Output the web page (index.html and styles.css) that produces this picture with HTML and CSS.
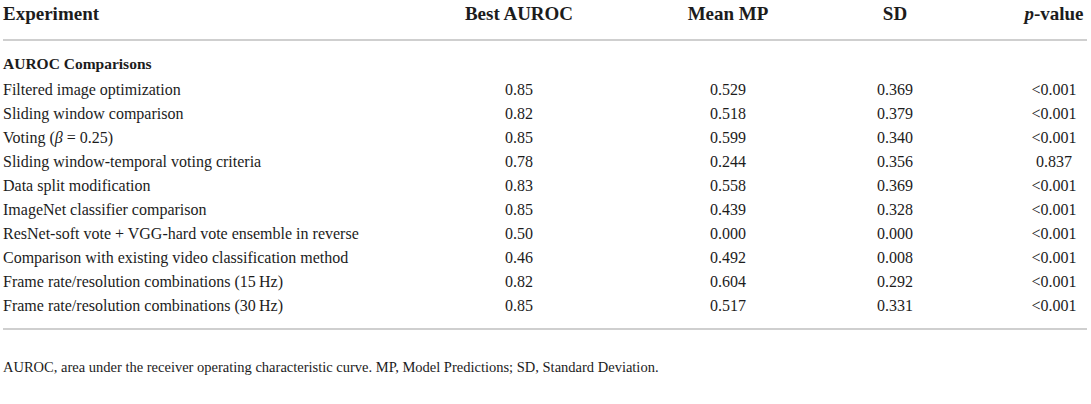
FILE: index.html
```html
<!DOCTYPE html>
<html lang="en">

<head>
    <meta charset="UTF-8" />
    <title>AUROC Comparisons</title>
    <link rel="stylesheet" href="styles.css">
</head>

<body>
    <div class="wrap">
        <table class="results">
            <colgroup>
                <col class="c-exp">
                <col class="c-best">
                <col class="c-mean">
                <col class="c-sd">
                <col class="c-p">
            </colgroup>
            <thead>
                <tr>
                    <th class="left">Experiment</th>
                    <th>Best AUROC</th>
                    <th>Mean MP</th>
                    <th>SD</th>
                    <th><i>p</i>-value</th>
                </tr>
            </thead>
            <tbody>
                <tr class="group">
                    <td colspan="5">AUROC Comparisons</td>
                </tr>
                <tr>
                    <td>Filtered image optimization</td>
                    <td>0.85</td>
                    <td>0.529</td>
                    <td>0.369</td>
                    <td>&lt;0.001</td>
                </tr>
                <tr>
                    <td>Sliding window comparison</td>
                    <td>0.82</td>
                    <td>0.518</td>
                    <td>0.379</td>
                    <td>&lt;0.001</td>
                </tr>
                <tr>
                    <td>Voting (<i>β</i> = 0.25)</td>
                    <td>0.85</td>
                    <td>0.599</td>
                    <td>0.340</td>
                    <td>&lt;0.001</td>
                </tr>
                <tr>
                    <td>Sliding window-temporal voting criteria</td>
                    <td>0.78</td>
                    <td>0.244</td>
                    <td>0.356</td>
                    <td>0.837</td>
                </tr>
                <tr>
                    <td>Data split modification</td>
                    <td>0.83</td>
                    <td>0.558</td>
                    <td>0.369</td>
                    <td>&lt;0.001</td>
                </tr>
                <tr>
                    <td>ImageNet classifier comparison</td>
                    <td>0.85</td>
                    <td>0.439</td>
                    <td>0.328</td>
                    <td>&lt;0.001</td>
                </tr>
                <tr>
                    <td>ResNet-soft vote + VGG-hard vote ensemble in reverse</td>
                    <td>0.50</td>
                    <td>0.000</td>
                    <td>0.000</td>
                    <td>&lt;0.001</td>
                </tr>
                <tr>
                    <td>Comparison with existing video classification method</td>
                    <td>0.46</td>
                    <td>0.492</td>
                    <td>0.008</td>
                    <td>&lt;0.001</td>
                </tr>
                <tr>
                    <td>Frame rate/resolution combinations (15&#8201;Hz)</td>
                    <td>0.82</td>
                    <td>0.604</td>
                    <td>0.292</td>
                    <td>&lt;0.001</td>
                </tr>
                <tr class="last">
                    <td>Frame rate/resolution combinations (30&#8201;Hz)</td>
                    <td>0.85</td>
                    <td>0.517</td>
                    <td>0.331</td>
                    <td>&lt;0.001</td>
                </tr>
            </tbody>
        </table>

        <p class="note">AUROC, area under the receiver operating characteristic curve. MP, Model Predictions; SD, Standard Deviation.</p>
    </div>
</body>

</html>
```

FILE: styles.css
```css
* {
    margin: 0;
    padding: 0;
    box-sizing: border-box;
}

body {
    background: #fff;
    color: #1c1c1c;
    font-family: "Liberation Serif", "Times New Roman", serif;
}

.wrap {
    padding: 0 4px 0 3px;
}

.results {
    width: 1084px;
    border-collapse: collapse;
    table-layout: fixed;
    border-bottom: 2px solid #cfcfcf;
}

.c-exp { width: 348px; }
.c-best { width: 336px; }
.c-mean { width: 82px; }
.c-sd { width: 252px; }
.c-p { width: 66px; }

th,
td {
    padding: 0;
    text-align: center;
    white-space: nowrap;
}

thead th {
    font-size: 19px;
    font-weight: 700;
    line-height: 28px;
    padding-bottom: 11px;
    border-bottom: 2px solid #cfcfcf;
}

th.left,
td:first-child {
    text-align: left;
}

tbody td {
    font-size: 16px;
    line-height: 24px;
}

.group td {
    font-weight: 700;
    font-size: 15.5px;
    padding: 11px 0 2px;
}

.last td {
    padding-bottom: 10px;
}

.note {
    font-size: 14.5px;
    line-height: 20px;
    margin-top: 27px;
}
```
